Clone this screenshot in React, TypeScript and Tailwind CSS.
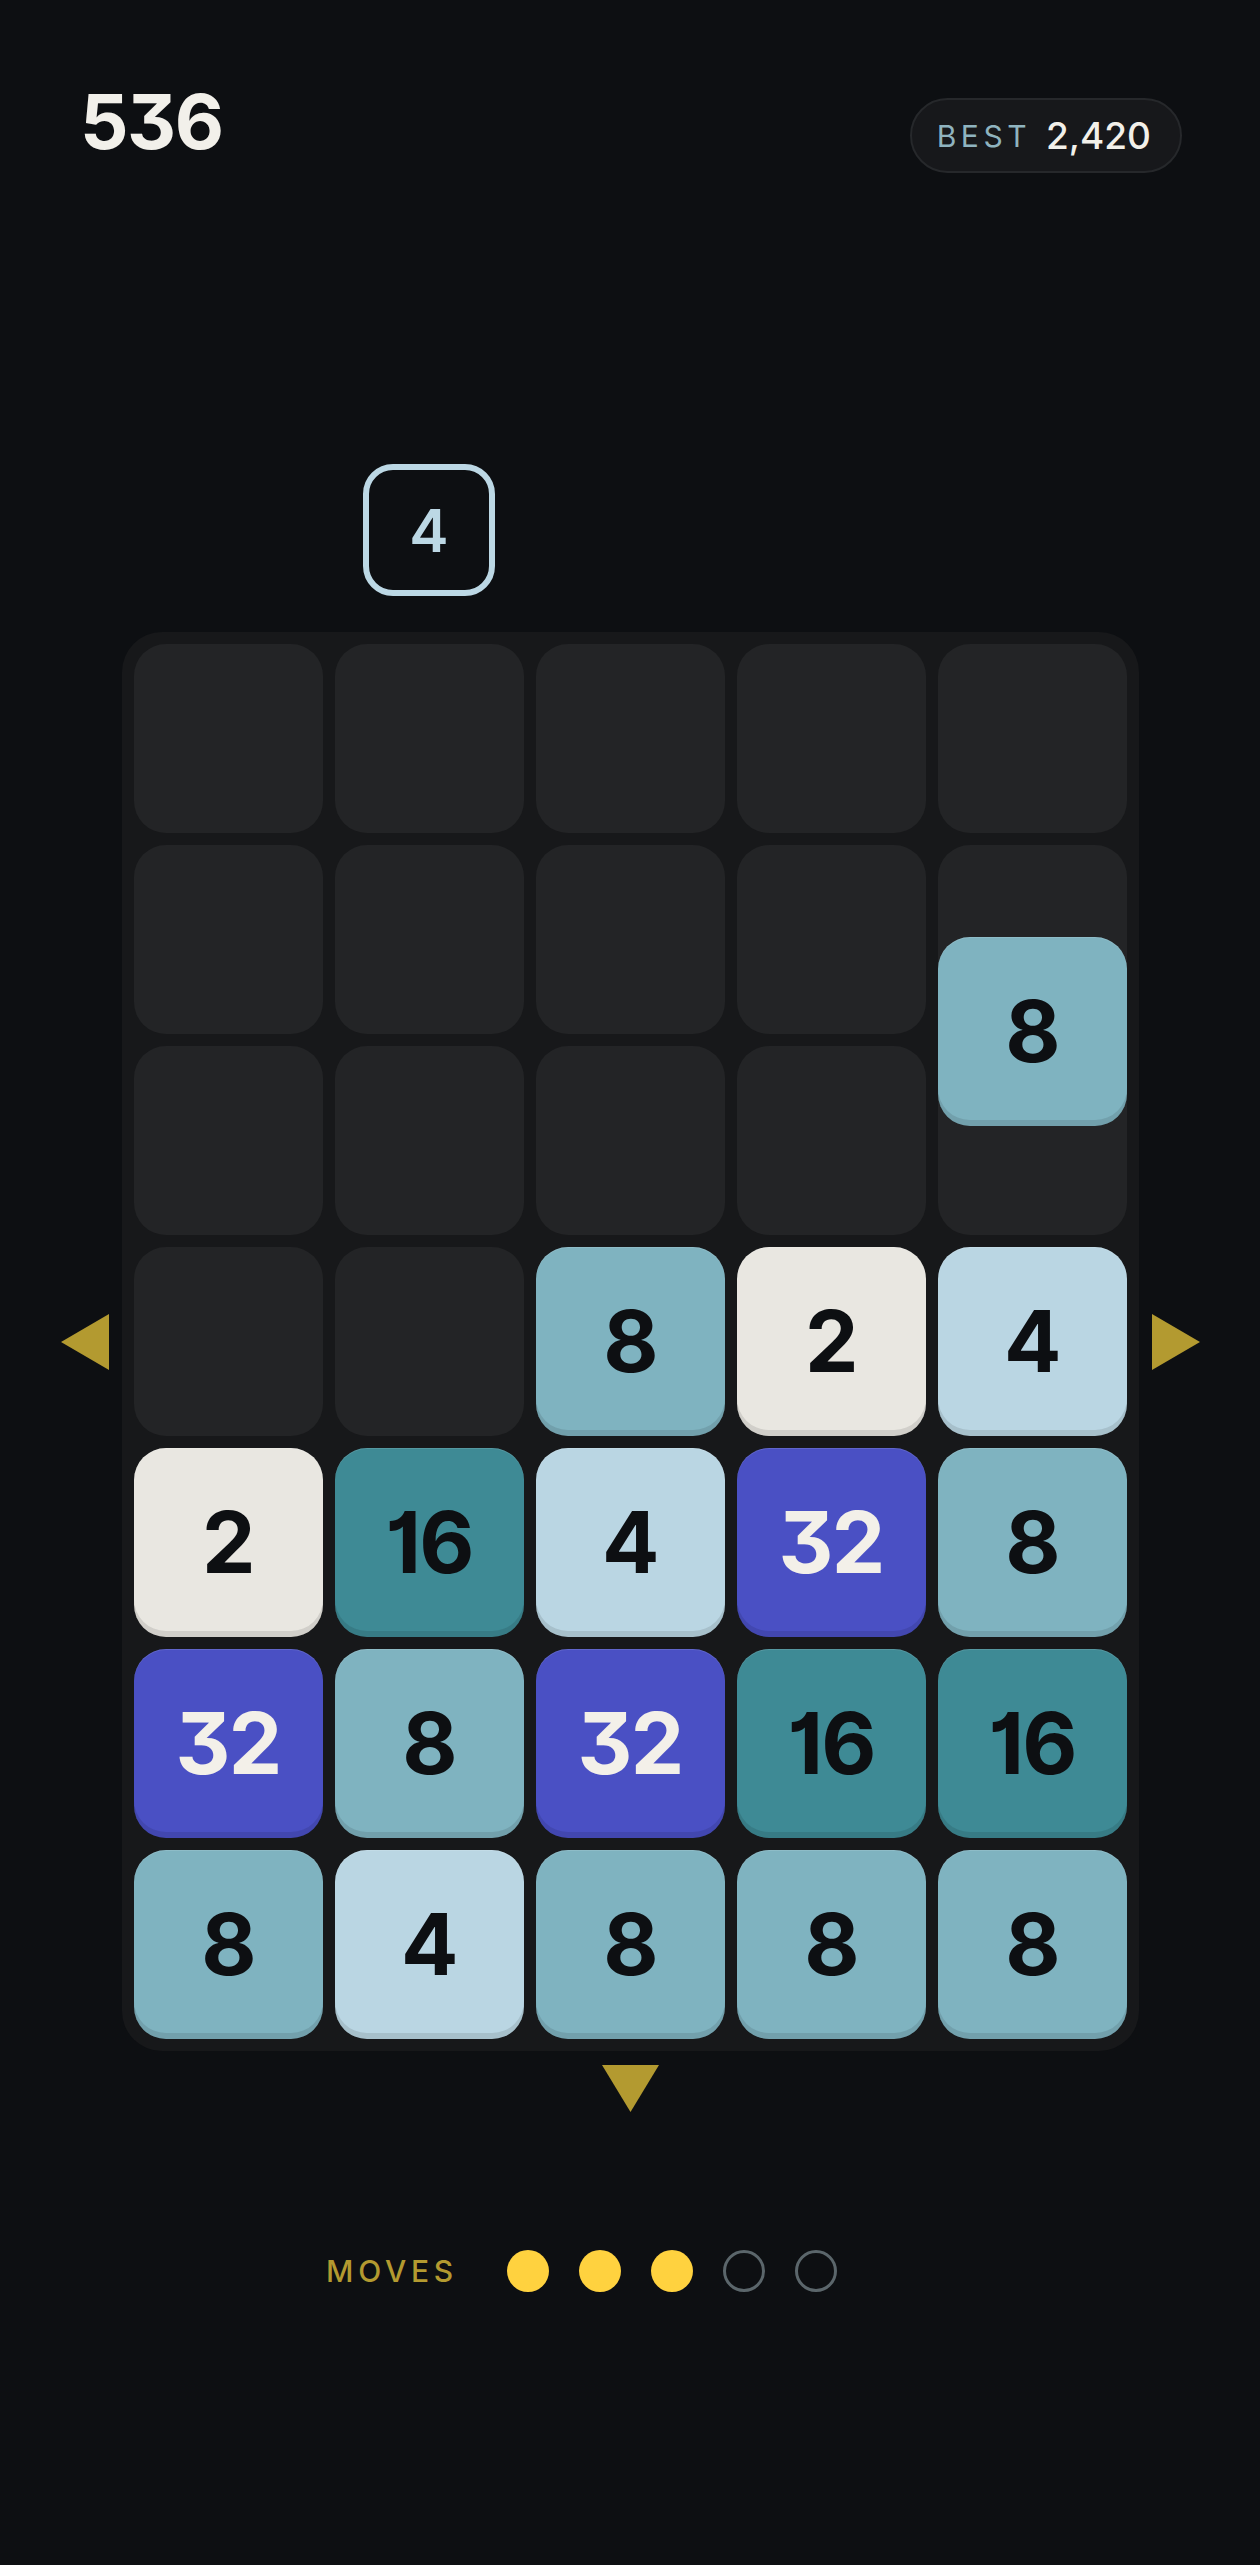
import React from "react";

type Cell = number | null;

const board: Cell[][] = [
  [null, null, null, null, null],
  [null, null, null, null, null],
  [null, null, null, null, null],
  [null, null, 8, 2, 4],
  [2, 16, 4, 32, 8],
  [32, 8, 32, 16, 16],
  [8, 4, 8, 8, 8],
];

function tileClass(v: number): string {
  switch (v) {
    case 2:
      return "bg-[#e9e7e1] text-[#0d0f12]";
    case 4:
      return "bg-[#bad6e3] text-[#0d0f12]";
    case 8:
      return "bg-[#7fb3c0] text-[#0d0f12]";
    case 16:
      return "bg-[#3e8a95] text-[#0d0f12]";
    case 32:
      return "bg-[#4a50c4] text-[#f3f0e9]";
    default:
      return "bg-[#232426] text-[#0d0f12]";
  }
}

function Tile({ v }: { v: number }) {
  return (
    <div
      className={`w-[189px] h-[189px] rounded-[32px] flex items-center justify-center text-[85px] font-bold leading-none tracking-[-0.02em] shadow-[inset_0_-6px_0_rgba(0,0,0,0.1),inset_0_1px_0_rgba(255,255,255,0.12)] ${tileClass(v)}`}
    >
      {v}
    </div>
  );
}

function Empty() {
  return <div className="w-[189px] h-[189px] rounded-[32px] bg-[#232426]" />;
}

export default function App() {
  return (
    <div className="w-full min-h-[2565px] bg-[#0d0f12] font-[Inter,'Noto_Sans',sans-serif] [font-feature-settings:'cv01','cv09']">
      {/* Header */}
      <div className="flex justify-between items-start pt-[83px] pl-[80px] pr-[78px]">
        <div className="text-[76px] font-bold leading-none tracking-[-0.02em] text-[#f2f0ea]">536</div>
        <div className="mt-[15px] h-[75px] flex items-center rounded-full border-2 border-[#26282b] bg-[#17181b] pl-[25px] pr-[29px]">
          <span className="text-[30px] leading-none tracking-[0.15em] text-[#8fb3bf]">BEST</span>
          <span className="ml-[15px] text-[37px] leading-none font-medium text-[#f2f0ea]">2,420</span>
        </div>
      </div>

      {/* Next tile */}
      <div className="mt-[291px] mx-auto w-[1017px] grid grid-cols-[repeat(5,189px)] gap-[12px] px-[12px]">
        <div className="col-start-2 justify-self-center w-[132px] h-[132px] rounded-[30px] border-[6px] border-[#bcd8e5] flex items-center justify-center text-[59px] font-semibold leading-none text-[#bcd8e5]">
          4
        </div>
      </div>

      {/* Board row */}
      <div className="mt-[36px] flex items-center justify-center gap-[13px]">
        <svg width="48" height="56" viewBox="0 0 48 56">
          <polygon points="48,0 0,28 48,56" fill="#b39a30" />
        </svg>
        <div className="relative rounded-[40px] bg-[#17181a] p-[12px] grid grid-cols-[repeat(5,189px)] grid-rows-[repeat(7,189px)] gap-[12px]">
          {board.map((row, r) =>
            row.map((v, c) => (v === null ? <Empty key={`${r}-${c}`} /> : <Tile key={`${r}-${c}`} v={v} />))
          )}
          <div className="absolute left-[816px] top-[305px]">
            <Tile v={8} />
          </div>
        </div>
        <svg width="48" height="56" viewBox="0 0 48 56">
          <polygon points="0,0 48,28 0,56" fill="#b39a30" />
        </svg>
      </div>

      {/* Down arrow */}
      <div className="mt-[14px] flex justify-center">
        <svg width="57" height="47" viewBox="0 0 57 47">
          <polygon points="0,0 57,0 28.5,47" fill="#b39a30" />
        </svg>
      </div>

      {/* Moves */}
      <div className="mt-[138px] ml-[326px] flex items-center">
        <span className="text-[30px] leading-none font-medium tracking-[0.16em] text-[#b39a30]">MOVES</span>
        <div className="ml-[49px] flex items-center gap-[30px]">
          <div className="w-[42px] h-[42px] rounded-full bg-[#ffd23f]" />
          <div className="w-[42px] h-[42px] rounded-full bg-[#ffd23f]" />
          <div className="w-[42px] h-[42px] rounded-full bg-[#ffd23f]" />
          <div className="w-[42px] h-[42px] rounded-full border-[3px] border-[#5b666b]" />
          <div className="w-[42px] h-[42px] rounded-full border-[3px] border-[#5b666b]" />
        </div>
      </div>
    </div>
  );
}
